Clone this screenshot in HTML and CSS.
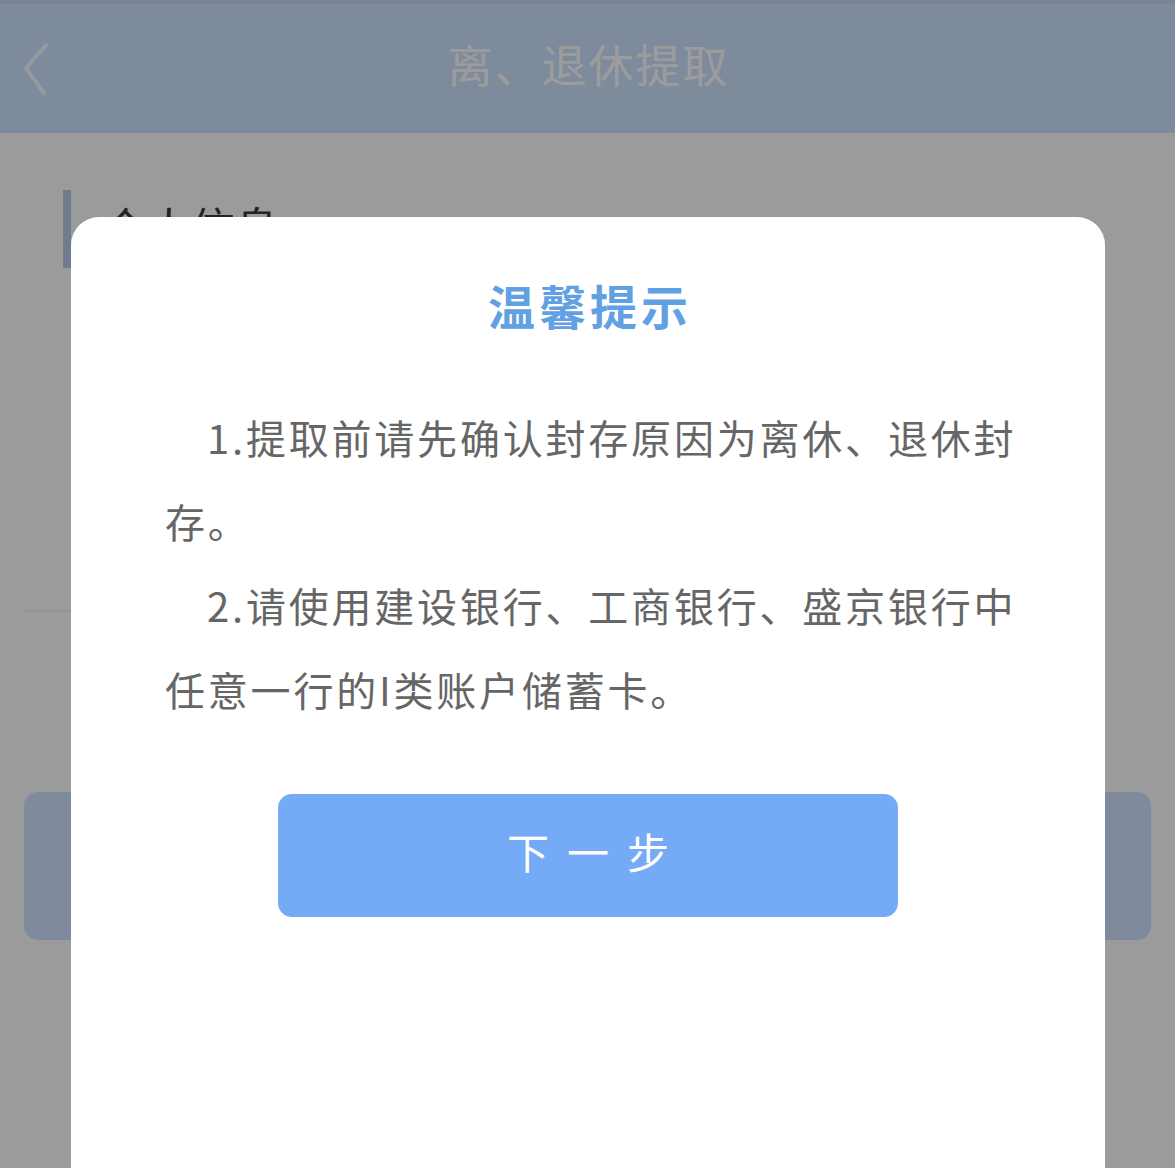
FILE: index.html
```html
<!DOCTYPE html>
<html lang="zh-CN">
<head>
  <meta charset="UTF-8">
  <title>离、退休提取</title>
  <link rel="stylesheet" href="styles.css">
</head>
<body>

  <div class="page">
    <div class="nav">
      <div class="nav-back">
        <svg width="30" height="56" viewBox="0 0 30 56">
          <polyline points="24,4 4,27 22,52" fill="none" stroke="#ffffff" stroke-width="4" stroke-linecap="round" stroke-linejoin="round"/>
        </svg>
      </div>
      <div class="nav-title">离、退休提取</div>
      <div></div>
    </div>

    <div class="info">
      <div class="info-head">个人信息</div>
    </div>
    <div class="fields"></div>
    <div class="page-btn"></div>
  </div>

  <!-- 遮罩 + 弹窗 -->
  <div class="mask"></div>
  <div class="dialog">
    <div class="dialog-title">温馨提示</div>
    <div class="tips">
      <p>1.提取前请先确认封存原因为离休、退休封存。</p>
      <p>2.请使用建设银行、工商银行、盛京银行中任意一行的I类账户储蓄卡。</p>
    </div>
    <button class="next-btn">下一步</button>
  </div>

</body>
</html>
```

FILE: styles.css
```css
* { box-sizing: border-box; }
body {
  margin: 0;
  background: #fff;
  font-family: "Noto Sans CJK SC", "Noto Sans", sans-serif;
}
.page {
  min-height: 1168px;
  background: #fefefe;
}
.nav {
  height: 133px;
  background: #cfe4ff;
  border-top: 4px solid #c6d9f2;
  display: grid;
  grid-template-columns: 1fr auto 1fr;
  align-items: center;
}
.nav-back {
  padding-left: 22px;
  display: flex;
  align-items: center;
  opacity: 0.85;
}
.nav-title {
  color: #fff;
  font-size: 45px;
  letter-spacing: 2px;
  padding-left: 2px;
  margin-top: -10px;
}
.info {
  padding: 57px 0 0 63px;
}
.info-head {
  height: 78px;
  border-left: 8px solid #b6cbe8;
  padding: 8px 0 0 32px;
  font-size: 44px;
  line-height: 1.3;
  color: #3a3a3a;
}
.fields {
  margin: 0 80px 0 24px;
  height: 344px;
  border-bottom: 2px solid #f0f0f0;
}
.page-btn {
  margin: 180px 24px 0;
  height: 148px;
  border-radius: 14px;
  background: #d0e4ff;
}
.mask {
  position: fixed;
  inset: 0;
  background: rgba(0, 0, 0, 0.39);
}
.dialog {
  position: fixed;
  left: 71px;
  right: 70px;
  top: 217px;
  bottom: 0;
  background: #fff;
  border-radius: 28px 28px 0 0;
  padding: 59px 94px 0;
}
.dialog-title {
  text-align: center;
  font-size: 47px;
  font-weight: bold;
  line-height: 58px;
  letter-spacing: 4px;
  padding-left: 4px;
  color: #62a0e4;
}
.tips {
  margin: 61px -16px 0 0;
  color: #666;
  font-size: 40px;
  line-height: 84px;
  letter-spacing: 2.8px;
}
.tips p {
  margin: 0;
  text-indent: 42px;
}
.next-btn {
  display: block;
  width: 620px;
  height: 123px;
  margin: 63px auto 0;
  border: none;
  border-radius: 14px;
  background: #75abf6;
  color: #fff;
  font-family: inherit;
  font-size: 42px;
  letter-spacing: 18px;
  padding: 0 0 10px 18px;
}
```
